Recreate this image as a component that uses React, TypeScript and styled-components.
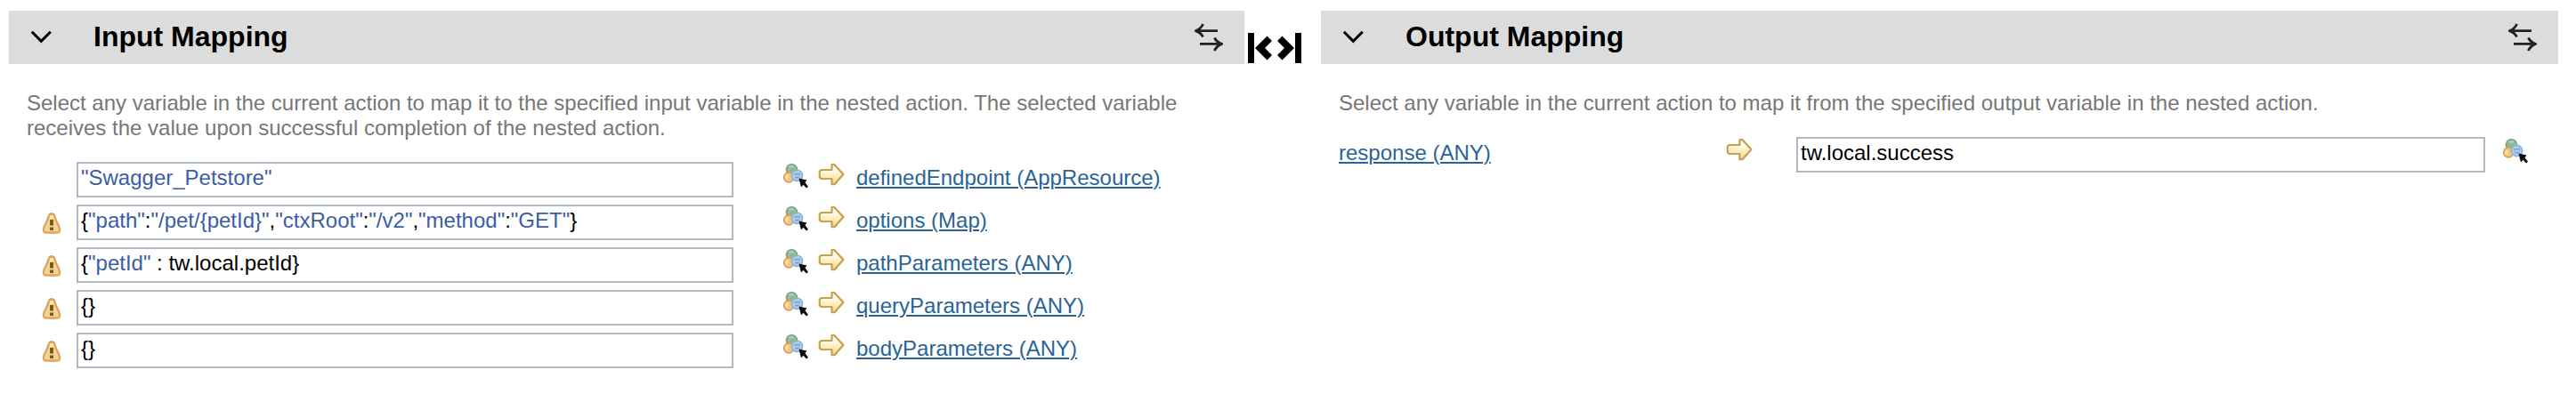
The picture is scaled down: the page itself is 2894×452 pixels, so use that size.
import React from "react";
import styled, { createGlobalStyle } from "styled-components";

const GlobalStyle = createGlobalStyle`
  *, *::before, *::after { box-sizing: border-box; }
  html, body { margin: 0; padding: 0; background: #fff; }
  body { font-family: "Liberation Sans", Arial, Helvetica, sans-serif; font-size: 24px; line-height: 28px; }
  svg { display: block; flex: none; }
`;

const Page = styled.main`
  display: flex;
  align-items: flex-start;
  height: 452px;
  padding: 12px 0 0 10px;
  overflow: hidden;
`;

const Panel = styled.section<{ $width: number }>`
  flex: none;
  width: ${(p) => p.$width}px;
`;

const PanelHeader = styled.header`
  display: flex;
  align-items: center;
  height: 60px;
  padding: 0 24px;
  background: #dcdcdc;
`;

const PanelTitle = styled.h2`
  flex: 1;
  margin: 0 0 0 45px;
  padding-bottom: 2px;
  font-size: 32px;
  line-height: 36px;
  font-weight: 700;
  color: #000;
`;

const Description = styled.p`
  width: 1320px;
  margin: 30px 0 24px 20px;
  color: #777;
`;

const Splitter = styled.div`
  flex: none;
  width: 86px;
  padding: 25px 0 0 4px;
`;

const RowList = styled.div`
  display: flex;
  flex-direction: column;
  gap: 8px;
`;

const Row = styled.div<{ $indent: number }>`
  display: flex;
  align-items: flex-start;
  height: 40px;
  padding-left: ${(p) => p.$indent}px;
`;

const WarningSlot = styled.div`
  flex: none;
  width: 40px;
  padding-top: 8px;
`;

const Field = styled.div<{ $width: number }>`
  flex: none;
  width: ${(p) => p.$width}px;
  height: 40px;
  padding: 2px 3px;
  border: 2px solid #b1b7c4;
  color: #000;
  white-space: pre;
`;

const StringToken = styled.span`
  color: #3c5ca6;
`;

const Slot = styled.div<{ $left: number }>`
  flex: none;
  margin-left: ${(p) => p.$left}px;
`;

const LinkSlot = styled.div<{ $left: number; $width?: number }>`
  flex: none;
  margin-left: ${(p) => p.$left}px;
  width: ${(p) => (p.$width ? `${p.$width}px` : "auto")};
  padding-top: 4px;
`;

const VariableLink = styled.a`
  color: #2a6496;
  text-decoration: underline;
  text-decoration-thickness: 2px;
  text-underline-offset: 2px;
  white-space: nowrap;
`;

const ChevronIcon = () => (
  <svg width="26" height="16" viewBox="0 0 26 16">
    <path d="M1.800 1.800L12.300 12.400L22.800 1.800" fill="none" stroke="#000" strokeWidth="3" />
  </svg>
);

const SwapIcon = () => (
  <svg width="32" height="32" viewBox="0 0 32 32" fill="none" stroke="#222" strokeWidth="2.8">
    <path d="M26 8.600H2M9.600 1C8 4.500 5.500 7.200 1.500 8.600C5.500 10.200 8 12.500 9.600 15.500" />
    <path d="M6 23.400H30M22.400 16.500C24 19.500 26.500 22 30.500 23.400C26.500 25 24 27.500 22.400 31" />
  </svg>
);

const ResizeIcon = () => (
  <svg width="60" height="34" viewBox="0 0 60 34">
    <path d="M0 0H7V34H0ZM53 0H60V34H53Z" />
    <path d="M8 17L21.5 3.5L27 9L19 17L27 25L21.5 30.5Z" />
    <path d="M52 17L38.5 3.5L33 9L41 17L33 25L38.5 30.5Z" />
  </svg>
);

const WarningIcon = () => (
  <svg width="24" height="26" viewBox="0 0 24 26">
    <path
      d="M9 4.500Q9.500 2.300 12 2.300Q14.500 2.300 15 4.500L17.500 11Q20.500 16.500 21 19V21.500Q20.500 23.500 18.500 23.500H5.500Q3.500 23.500 3 21.500V19Q3.500 16.500 6.500 11Z"
      fill="#f7d48d"
      stroke="#dda660"
      strokeWidth="2.4"
    />
    <path d="M10.400 4.500H13.600V8H10.400Z" fill="#fff0c8" />
    <path d="M10 9H14V15.500H10ZM10 17.500H14V21H10Z" fill="#7a5a28" />
  </svg>
);

const PickerIcon = () => (
  <svg width="28" height="32" viewBox="0 0 28 32">
    <circle cx="9.500" cy="8.800" r="6.200" fill="#8fbb99" stroke="#73a17f" strokeWidth="1.400" />
    <path d="M6.500 5.500H12" stroke="#b5d5ba" strokeWidth="2" />
    <circle cx="6.200" cy="17.400" r="5.600" fill="#f5c878" stroke="#d79b55" strokeWidth="1.400" />
    <path d="M4 15V20" stroke="#fde6b4" strokeWidth="2.400" />
    <circle cx="15.400" cy="15.400" r="6.300" fill="#a9cbea" stroke="#86aed6" strokeWidth="1.400" />
    <path d="M12 13.700H19M13 17.500H18" stroke="#7fa5cf" strokeWidth="1.500" />
    <path d="M17.500 18.500L26.500 20.500L24.500 23.300L28 27.700L26 29.500L22.500 25.800L20 28.500Z" fill="#0c0c0c" />
  </svg>
);

const ArrowIcon = () => (
  <svg width="30" height="28" viewBox="0 0 30 28">
    <defs>
      <linearGradient id="arrowFill" x1="0" y1="0" x2="0" y2="1">
        <stop offset="0.2" stopColor="#fffdf2" />
        <stop offset="1" stopColor="#f5da86" />
      </linearGradient>
    </defs>
    <path
      d="M3.500 9H15.500V3.200H18.500L28.500 14L18.500 25.200H15.500V19H3.500L1.800 17.300V10.700Z"
      fill="url(#arrowFill)"
      stroke="#c2a254"
      strokeWidth="2.200"
      strokeLinejoin="round"
    />
  </svg>
);

type Token = { text: string; str?: boolean };
const s = (text: string): Token => ({ text, str: true });
const t = (text: string): Token => ({ text });

const inputs: { label: string; warn: boolean; value: Token[] }[] = [
  { label: "definedEndpoint (AppResource)", warn: false, value: [s('"Swagger_Petstore"')] },
  {
    label: "options (Map)",
    warn: true,
    value: [
      t("{"), s('"path"'), t(":"), s('"/pet/{petId}"'), t(","), s('"ctxRoot"'), t(":"),
      s('"/v2"'), t(","), s('"method"'), t(":"), s('"GET"'), t("}"),
    ],
  },
  { label: "pathParameters (ANY)", warn: true, value: [t("{"), s('"petId"'), t(" : tw.local.petId}")] },
  { label: "queryParameters (ANY)", warn: true, value: [t("{}")] },
  { label: "bodyParameters (ANY)", warn: true, value: [t("{}")] },
];

const Expression = ({ tokens }: { tokens: Token[] }) => (
  <>
    {tokens.map((token, i) =>
      token.str ? <StringToken key={i}>{token.text}</StringToken> : <span key={i}>{token.text}</span>
    )}
  </>
);

const Header = ({ title }: { title: string }) => (
  <PanelHeader>
    <ChevronIcon />
    <PanelTitle>{title}</PanelTitle>
    <SwapIcon />
  </PanelHeader>
);

export default function App() {
  return (
    <>
      <GlobalStyle />
      <Page>
        <Panel $width={1388}>
          <Header title="Input Mapping" />
          <Description>
            Select any variable in the current action to map it to the specified input variable in the nested
            action. The selected variable receives the value upon successful completion of the nested action.
          </Description>
          <RowList>
            {inputs.map((row) => (
              <Row key={row.label} $indent={36}>
                <WarningSlot>{row.warn && <WarningIcon />}</WarningSlot>
                <Field $width={738}>
                  <Expression tokens={row.value} />
                </Field>
                <Slot $left={56}>
                  <PickerIcon />
                </Slot>
                <Slot $left={11}>
                  <ArrowIcon />
                </Slot>
                <LinkSlot $left={13}>
                  <VariableLink>{row.label}</VariableLink>
                </LinkSlot>
              </Row>
            ))}
          </RowList>
        </Panel>
        <Splitter>
          <ResizeIcon />
        </Splitter>
        <Panel $width={1390}>
          <Header title="Output Mapping" />
          <Description>
            Select any variable in the current action to map it from the specified output variable in the nested
            action.
          </Description>
          <Row $indent={20}>
            <LinkSlot $left={0} $width={435}>
              <VariableLink>response (ANY)</VariableLink>
            </LinkSlot>
            <Slot $left={0}>
              <ArrowIcon />
            </Slot>
            <Slot $left={49}>
              <Field $width={774}>tw.local.success</Field>
            </Slot>
            <Slot $left={20}>
              <PickerIcon />
            </Slot>
          </Row>
        </Panel>
      </Page>
    </>
  );
}
